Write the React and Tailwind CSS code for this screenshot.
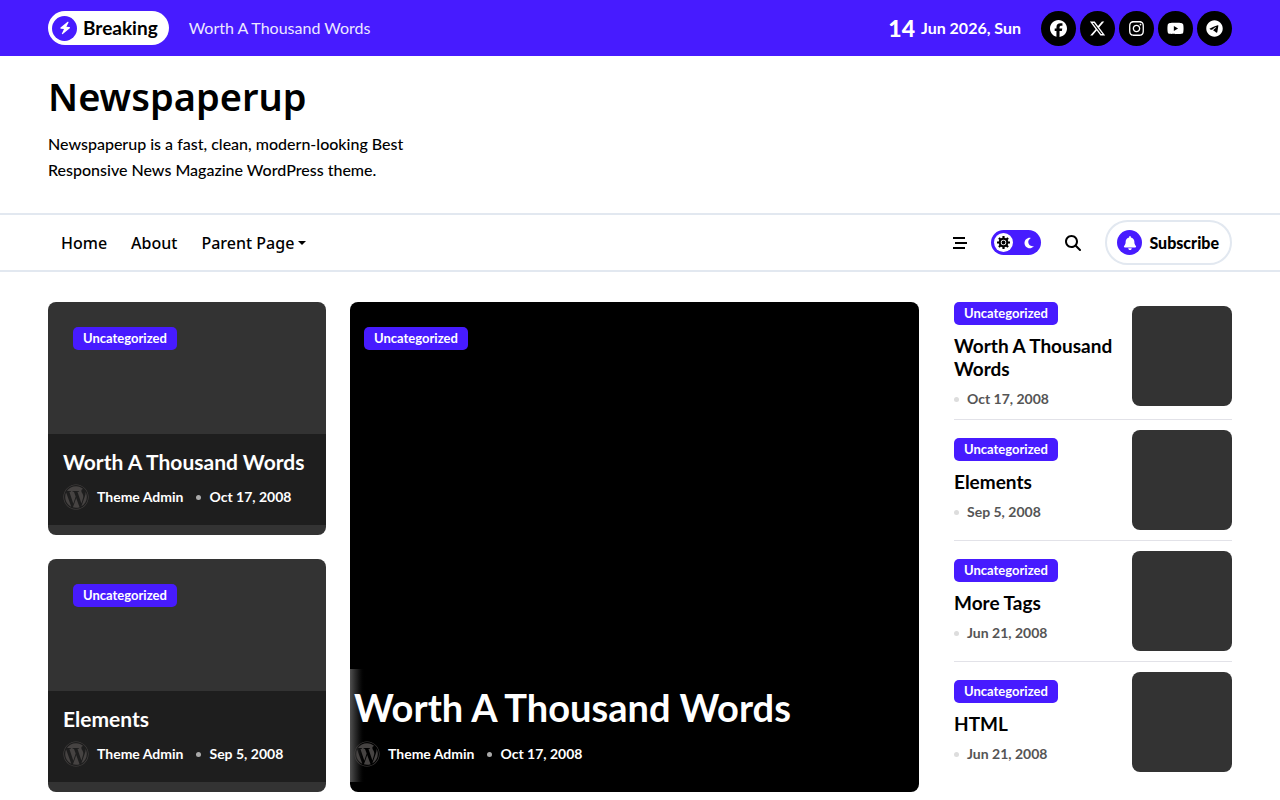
import React, { useState } from 'react';
import {
    FaBell,
    FaFacebook,
    FaInstagram,
    FaMagnifyingGlass,
    FaMoon,
    FaTelegram,
    FaWordpress,
    FaXTwitter,
    FaYoutube,
} from 'react-icons/fa6';

const socials = [
    { name: 'Facebook', icon: FaFacebook },
    { name: 'X', icon: FaXTwitter },
    { name: 'Instagram', icon: FaInstagram },
    { name: 'YouTube', icon: FaYoutube },
    { name: 'Telegram', icon: FaTelegram },
];

const cards = [
    { title: 'Worth A Thousand Words', date: 'Oct 17, 2008' },
    { title: 'Elements', date: 'Sep 5, 2008' },
];

const posts = [
    { title: 'Worth A Thousand Words', date: 'Oct 17, 2008' },
    { title: 'Elements', date: 'Sep 5, 2008' },
    { title: 'More Tags', date: 'Jun 21, 2008' },
    { title: 'HTML', date: 'Jun 21, 2008' },
];

const Category = () => (
    <a href="#" className="block w-fit rounded-[5px] bg-[#471bff] px-[10px] text-[13px] leading-[23px] font-bold text-white">
        Uncategorized
    </a>
);

const Meta = ({ date }) => (
    <div className="flex items-center text-sm leading-[26px] font-bold text-white">
        <FaWordpress className="mr-2 size-[26px] text-[#464342]" />
        <a href="#">Theme Admin</a>
        <span className="mr-2 ml-[13px] size-[5px] rounded-full bg-[#aaa]" />
        <a href="#">{date}</a>
    </div>
);

const BoltIcon = () => (
    <svg viewBox="0 0 12 14" className="h-[14px] w-3" fill="currentColor">
        <path d="M8.6.8 1.6 6.6c-.5.4-.3 1.2.4 1.2l3 .3-2.1 4.3c-.3.6.4 1.1.9.7l7-5.8c.5-.4.2-1.2-.4-1.2l-3-.3L9.5 1.5c.3-.6-.4-1.1-.9-.7z" />
    </svg>
);

const SunIcon = () => (
    <svg viewBox="0 0 24 24" className="size-[13px]" fill="none" stroke="currentColor">
        <circle cx="12" cy="12" r="7" strokeWidth="4" />
        <circle cx="12" cy="12" r="3.5" fill="currentColor" stroke="none" />
        <path d="M12 0v5M12 19v5M0 12h5M19 12h5M3.5 3.5 7 7M17 17l3.5 3.5M20.5 3.5 17 7M7 17l-3.5 3.5" strokeWidth="4" />
    </svg>
);

const TopBar = () => (
    <div className="flex h-14 items-center bg-[#471bff] px-12 text-white">
        <div className="flex h-[34px] items-center rounded-full bg-white pr-[11px] pl-1 text-black">
            <span className="mr-[6px] flex size-[25px] items-center justify-center rounded-full bg-[#471bff] text-white">
                <BoltIcon />
            </span>
            <span className="text-[19px] font-bold">Breaking</span>
        </div>
        <a href="#" className="ml-5 text-base text-[#ece8ff]">Worth A Thousand Words</a>
        <div className="ml-auto flex items-center">
            <span className="text-[23px] font-black">14</span>
            <span className="ml-[6px] text-base font-bold">Jun 2026, Sun</span>
        </div>
        <div className="ml-5 flex gap-1">
            {socials.map(({ name, icon: Icon }) => (
                <a key={name} href="#" aria-label={name} className="flex size-[35px] items-center justify-center rounded-full bg-black">
                    <Icon className="size-[17px]" />
                </a>
            ))}
        </div>
    </div>
);

const NavBar = () => {
    const [dark, setDark] = useState(false);

    return (
        <nav className="flex items-center border-y-2 border-[#e2e8f0] px-12 py-[5px]">
            <div className="flex gap-6 pl-[13px] font-['Noto_Sans',sans-serif] text-base leading-[26px] font-medium">
                <a href="#">Home</a>
                <a href="#">About</a>
                <a href="#" className="flex items-center gap-1">
                    Parent Page
                    <span className="border-x-4 border-t-4 border-x-transparent border-t-black" />
                </a>
            </div>
            <div className="ml-auto flex items-center">
                <button type="button" aria-label="Menu" className="mr-6">
                    <svg viewBox="0 0 14 12" className="h-3 w-[14px]" stroke="currentColor" strokeWidth="2">
                        <path d="M0 1h12M2 6h12M0 11h12" />
                    </svg>
                </button>
                <button
                    type="button"
                    role="switch"
                    aria-checked={dark}
                    aria-label="Dark mode"
                    onClick={() => setDark(!dark)}
                    className="mr-6 flex h-[25px] w-[50px] items-center justify-between rounded-full bg-[#471bff] pr-[6px] pl-[3px]"
                >
                    <span className="flex size-[19px] items-center justify-center rounded-full bg-white">
                        <SunIcon />
                    </span>
                    <FaMoon className="size-3 text-white" />
                </button>
                <button type="button" aria-label="Search" className="mr-6">
                    <FaMagnifyingGlass className="size-4" />
                </button>
                <a href="#" className="flex h-[45px] items-center gap-[7px] rounded-full border-2 border-[#e2e8f0] pr-[11px] pl-[10px] text-base font-black">
                    <span className="flex size-[25px] items-center justify-center rounded-full bg-[#471bff] text-white">
                        <FaBell className="size-[14px]" />
                    </span>
                    Subscribe
                </a>
            </div>
        </nav>
    );
};

const SmallCard = ({ title, date }) => (
    <article className="flex min-h-[233px] flex-col justify-between overflow-hidden rounded-lg bg-[#333] pb-[10px]">
        <div className="px-[25px] pt-[25px]">
            <Category />
        </div>
        <div className="bg-[#1e1e1e] px-[15px] pt-[14px] pb-[15px]">
            <h2 className="mb-[9px] text-[21px] leading-[27px] font-bold text-white">
                <a href="#">{title}</a>
            </h2>
            <Meta date={date} />
        </div>
    </article>
);

const Slide = () => (
    <article className="flex min-h-[490px] flex-col justify-between overflow-hidden rounded-lg bg-black pb-[10px]">
        <div className="px-[14px] pt-[25px]">
            <Category />
        </div>
        <div className="bg-linear-to-r from-[#505050] to-black to-[16px] px-1 pt-[14px] pb-[15px]">
            <h2 className="mb-[10px] text-[38px] leading-[48px] font-bold text-white">
                <a href="#">Worth A Thousand Words</a>
            </h2>
            <Meta date="Oct 17, 2008" />
        </div>
    </article>
);

const ListPost = ({ title, date }) => (
    <li className="flex items-center justify-between border-b border-[#e2e2e8] py-[10px] first:pt-0 last:border-b-0">
        <div className="w-[165px]">
            <Category />
            <h3 className="my-[9px] text-[19px] leading-[23px] font-bold">
                <a href="#">{title}</a>
            </h3>
            <p className="flex items-center gap-2 text-sm font-bold text-[#555]">
                <span className="size-[5px] rounded-full bg-[#ddd]" />
                {date}
            </p>
        </div>
        <div className="size-[100px] rounded-lg bg-[#333]" />
    </li>
);

const App = () => {
    return (
        <div className="bg-white font-[Lato,sans-serif] text-black">
            <TopBar />
            <header className="px-12 pt-3 pb-[30px]">
                <h1 className="font-['Noto_Sans',sans-serif] text-[38px] leading-[56px] font-semibold">
                    <a href="#">Newspaperup</a>
                </h1>
                <p className="mt-[7px] max-w-[380px] text-base leading-[26px] font-medium">
                    Newspaperup is a fast, clean, modern-looking Best Responsive News Magazine WordPress theme.
                </p>
            </header>
            <NavBar />
            <main className="grid grid-cols-[278fr_569fr_289fr] gap-6 px-12 pt-[30px]">
                <div className="flex flex-col gap-6">
                    {cards.map((card) => (
                        <SmallCard key={card.title} {...card} />
                    ))}
                </div>
                <Slide />
                <ul className="pl-[11px]">
                    {posts.map((post) => (
                        <ListPost key={post.title} {...post} />
                    ))}
                </ul>
            </main>
        </div>
    );
};

export default App;
